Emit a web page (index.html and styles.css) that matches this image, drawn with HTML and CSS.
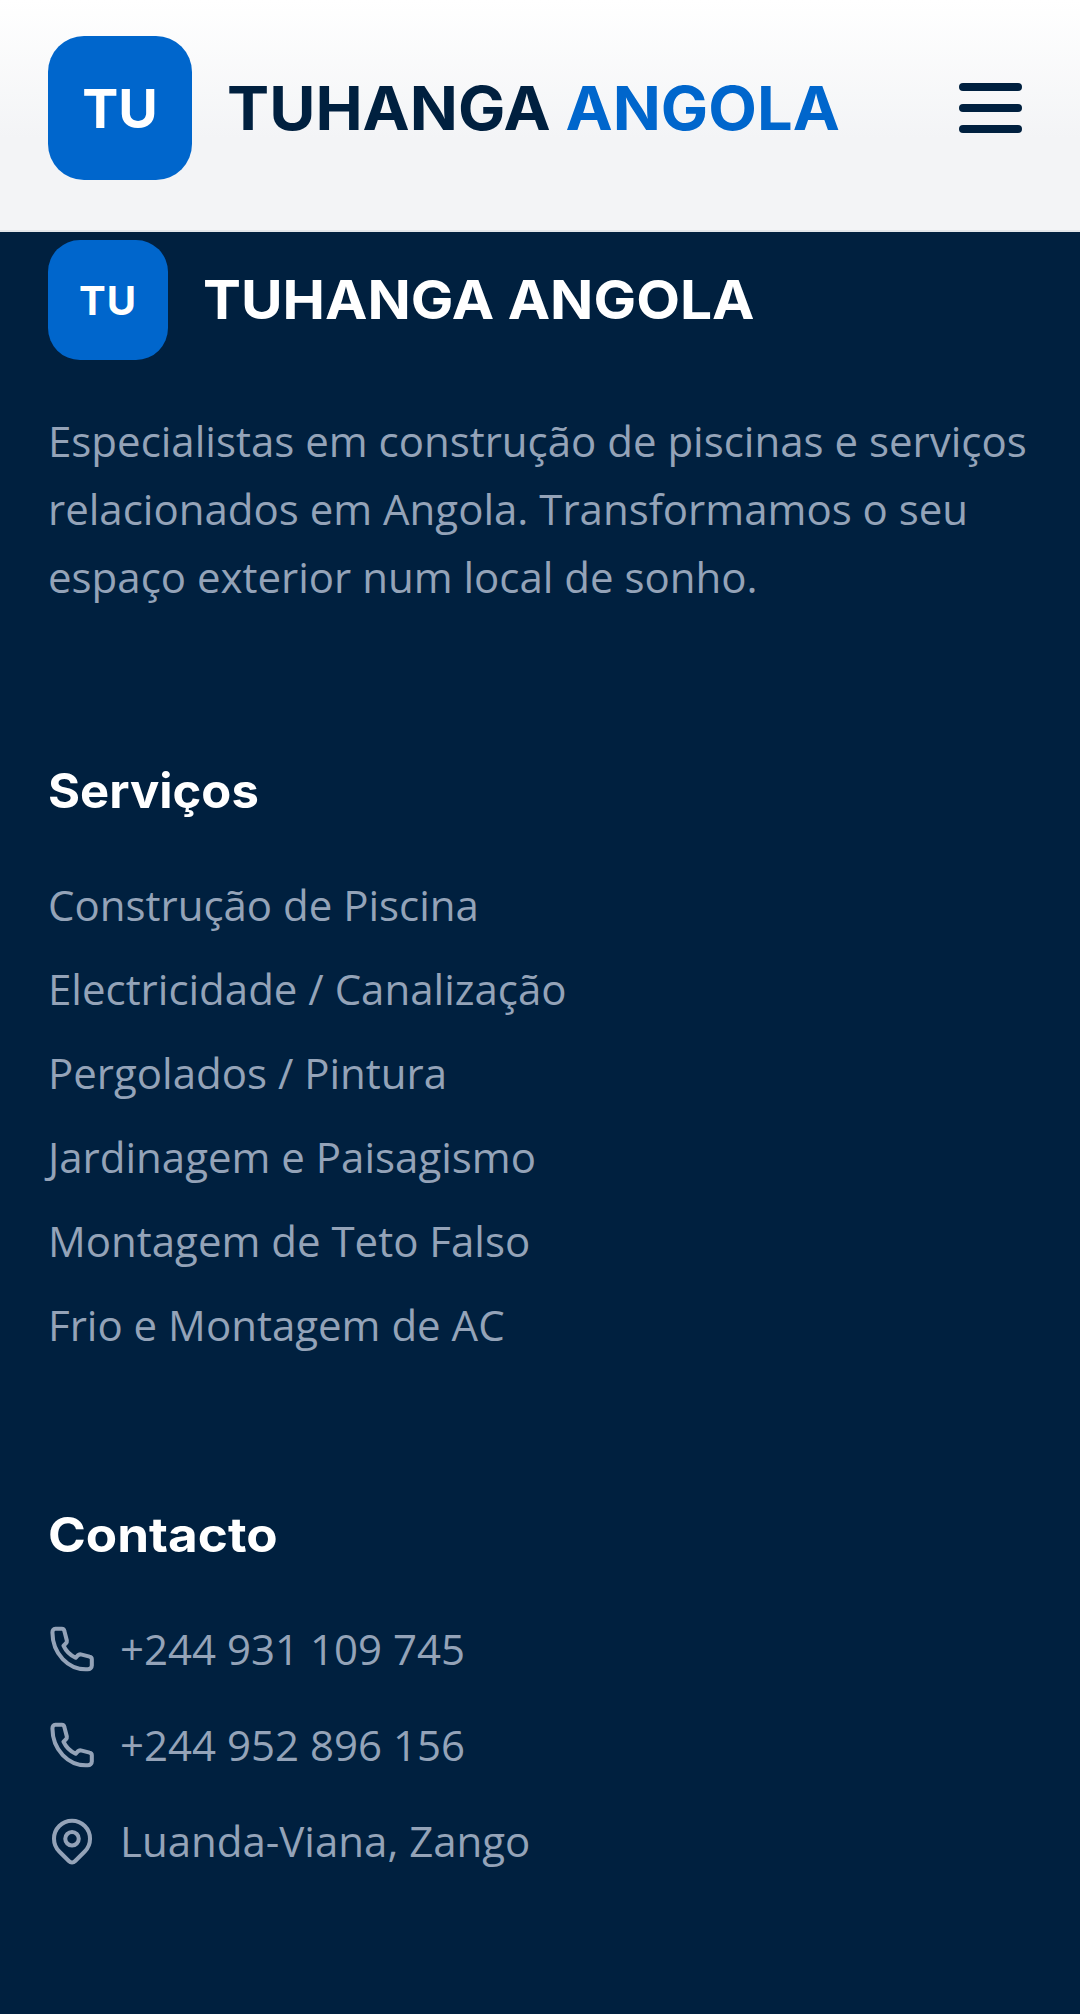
FILE: index.html
```html
<!DOCTYPE html>
<html lang="pt">
<head>
<meta charset="utf-8">
<title>Tuhanga Angola</title>
<link rel="stylesheet" href="styles.css">
</head>
<body>
<header class="header">
  <div class="brand">
    <div class="logo logo-lg">TU</div>
    <div class="brand-name">TUHANGA <span class="accent">ANGOLA</span></div>
  </div>
  <button class="menu" aria-label="Menu"><span></span><span></span><span></span></button>
</header>
<footer class="footer">
  <div class="footer-brand">
    <div class="logo logo-sm">TU</div>
    <div class="footer-name">TUHANGA ANGOLA</div>
  </div>
  <p class="about">Especialistas em construção de piscinas e serviços relacionados em Angola. Transformamos o seu espaço exterior num local de sonho.</p>
  <h3 class="title services-title">Serviços</h3>
  <ul class="links">
    <li>Construção de Piscina</li>
    <li>Electricidade / Canalização</li>
    <li>Pergolados / Pintura</li>
    <li>Jardinagem e Paisagismo</li>
    <li>Montagem de Teto Falso</li>
    <li>Frio e Montagem de AC</li>
  </ul>
  <h3 class="title contact-title">Contacto</h3>
  <ul class="contacts">
    <li><svg class="icon" viewBox="1.33 1.33 21.33 21.33"><path d="M4.6 3h2.900c.6 0 1 .4 1.100 1l1.100 4.200c.1 .6 -.1 1 -.5 1.400l-1 .9c1.100 2.400 3.100 4.300 5.400 5.400l.9 -1c.4 -.4 .9 -.6 1.400 -.5l3.900 1c.6 .1 1 .5 1 1.100v2.800c0 1 -.8 1.700 -1.800 1.700C10.300 21.500 3.300 13.900 3.300 4.700c0 -.9 .4 -1.700 1.300 -1.700z"/></svg><span>+244 931 109 745</span></li>
    <li><svg class="icon" viewBox="1.33 1.33 21.33 21.33"><path d="M4.6 3h2.900c.6 0 1 .4 1.100 1l1.100 4.200c.1 .6 -.1 1 -.5 1.400l-1 .9c1.100 2.400 3.100 4.300 5.400 5.400l.9 -1c.4 -.4 .9 -.6 1.400 -.5l3.900 1c.6 .1 1 .5 1 1.100v2.800c0 1 -.8 1.700 -1.800 1.700C10.300 21.500 3.300 13.900 3.300 4.700c0 -.9 .4 -1.700 1.300 -1.700z"/></svg><span>+244 952 896 156</span></li>
    <li><svg class="icon" viewBox="1.33 1.33 21.33 21.33"><circle cx="12" cy="11" r="3"/><path d="M17.657 16.657l-4.243 4.243a2 2 0 0 1-2.827 0l-4.244-4.243a8 8 0 1 1 11.314 0z"/></svg><span>Luanda-Viana, Zango</span></li>
  </ul>
</footer>
</body>
</html>
```
FILE: styles.css
```css
* { box-sizing: border-box; }
html, body { margin: 0; padding: 0; }
body {
  width: 1080px;
  height: 2014px;
  overflow: hidden;
  background: #00203f;
  font-family: "Open Sans", "Noto Sans", sans-serif;
}
.header {
  height: 232px;
  padding: 0 48px;
  display: flex;
  align-items: center;
  justify-content: space-between;
  background: linear-gradient(180deg, #ffffff 0%, #f3f4f6 60%);
  border-bottom: 2px solid #e2e6ea;
}
.brand, .footer-brand { display: flex; align-items: center; gap: 35px; }
.brand { margin-top: -14px; }
.logo {
  display: flex;
  align-items: center;
  justify-content: center;
  background: #0066cc;
  color: #fff;
  font-family: Inter, "Liberation Sans", sans-serif;
  font-weight: 700;
}
.logo-lg { width: 144px; height: 144px; border-radius: 36px; font-size: 54px; }
.logo-sm { width: 120px; height: 120px; border-radius: 32px; font-size: 40px; letter-spacing: 1px; }
.brand-name, .footer-name, .title {
  font-family: Inter, "Liberation Sans", sans-serif;
  font-weight: 700;
  transform-origin: left center;
}
.brand-name, .footer-name { transform: scaleX(1.053); white-space: nowrap; }
.brand-name { font-size: 60px; color: #00203f; line-height: 72px; }
.accent { color: #0066cc; }
.menu {
  width: 63px;
  height: 50px;
  margin: -14px 10px 0 0;
  padding: 0;
  border: 0;
  background: none;
  display: flex;
  flex-direction: column;
  justify-content: space-between;
}
.menu span { display: block; height: 8px; border-radius: 4px; background: #00203f; }
.footer { padding: 8px 48px 0; color: #94a3b8; }
.footer-name { font-size: 54px; color: #fff; line-height: 64px; }
.about { margin: 47px 0 0; font-size: 42px; line-height: 68px; }
.title { margin: 0; color: #fff; font-size: 48px; line-height: 56px; }
.services-title { margin-top: 152px; transform: scaleX(1.02); }
.contact-title { margin-top: 154px; transform: scaleX(1.066); }
.links, .contacts { list-style: none; margin: 0; padding: 0; font-size: 42px; }
.links { margin-top: 58px; display: flex; flex-direction: column; gap: 28px; }
.links li { line-height: 56px; }
.contacts { margin-top: 58px; display: flex; flex-direction: column; gap: 40px; }
.contacts li { display: flex; align-items: center; gap: 24px; line-height: 56px; }
.icon {
  width: 48px;
  height: 48px;
  flex: none;
  fill: none;
  stroke: #94a3b8;
  stroke-width: 1.8;
  stroke-linecap: round;
  stroke-linejoin: round;
}
```
